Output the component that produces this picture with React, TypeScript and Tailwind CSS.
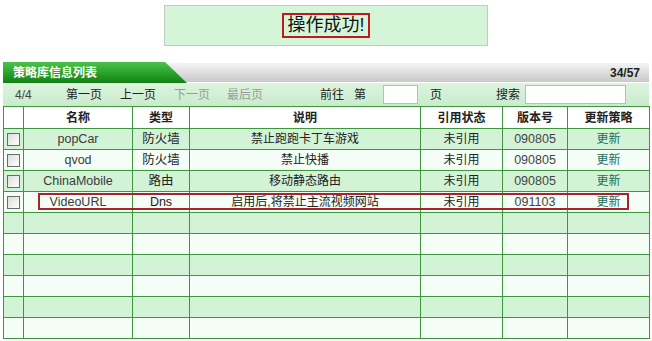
const rows = [
  { name: "popCar", type: "防火墙", desc: "禁止跑跑卡丁车游戏", status: "未引用", ver: "090805" },
  { name: "qvod", type: "防火墙", desc: "禁止快播", status: "未引用", ver: "090805" },
  { name: "ChinaMobile", type: "路由", desc: "移动静态路由", status: "未引用", ver: "090805" },
  { name: "VideoURL", type: "Dns", desc: "启用后,将禁止主流视频网站", status: "未引用", ver: "091103" },
];

const emptyRows = [0, 1, 2, 3, 4, 5];

function Checkbox() {
  return (
    <span className="inline-block h-[13px] w-[13px] border border-[#6b6b6b] bg-gradient-to-br from-[#dcdcdc] to-[#ffffff] align-middle" />
  );
}

export default function App() {
  const font = { fontFamily: '"Liberation Sans", "Noto Sans CJK SC", sans-serif' };
  return (
    <div className="h-[341px] w-[652px] overflow-hidden bg-white px-[3px] text-[12px] text-[#222]" style={font}>
      {/* 提示框 */}
      <div className="mx-auto mt-[5px] flex h-[41px] w-[324px] items-center justify-center border border-[#c4c9c4] bg-[#d5f5d9]">
        <span className="border-2 border-[#c0181d] px-[3px] text-[18px] leading-[21px] text-[#111]">
          操作成功!
        </span>
      </div>

      {/* 标题栏 */}
      <div className="relative mt-[16px] h-[21px]">
        <div className="absolute inset-x-0 top-[1px] h-[19px] bg-gradient-to-b from-[#f4f4f4] to-[#c9c9c9]" />
        <div className="absolute left-0 top-0 h-[21px] w-[184px] bg-gradient-to-b from-[#4cc24c] via-[#2aa52a] to-[#167e16] [clip-path:polygon(0_0,162px_0,184px_100%,0_100%)]" />
        <div className="relative flex h-full items-center justify-between pl-[10px] pr-[9px]">
          <span className="font-bold text-white">策略库信息列表</span>
          <span className="font-bold text-[#222]">34/57</span>
        </div>
      </div>

      {/* 工具栏 */}
      <div className="flex h-[23px] items-center bg-gradient-to-b from-[#ddf3dd] to-[#c9eccc] text-[#222]">
        <span className="ml-[12px] w-[51px] text-[#444]">4/4</span>
        <span className="w-[54px]">第一页</span>
        <span className="w-[54px]">上一页</span>
        <span className="w-[53px] text-[#9a9a9a]">下一页</span>
        <span className="w-[93px] text-[#9a9a9a]">最后页</span>
        <span className="w-[34px]">前往</span>
        <span className="w-[29px]">第</span>
        <span className="h-[19px] w-[35px] border border-[#bcbcbc] bg-white" />
        <span className="ml-[12px] w-[66px]">页</span>
        <span className="w-[29px]">搜索</span>
        <span className="h-[19px] w-[101px] border border-[#bcbcbc] bg-white" />
      </div>

      {/* 列表 */}
      <div className="relative">
        <table className="w-[646px] table-fixed border-collapse">
          <colgroup>
            <col className="w-[20px]" />
            <col className="w-[109px]" />
            <col className="w-[57px]" />
            <col className="w-[231px]" />
            <col className="w-[82px]" />
            <col className="w-[65px]" />
            <col className="w-[82px]" />
          </colgroup>
          <thead>
            <tr className="h-[22px] bg-white font-bold">
              <th className="border border-[#3f963f]" />
              <th className="border border-[#3f963f]">名称</th>
              <th className="border border-[#3f963f]">类型</th>
              <th className="border border-[#3f963f]">说明</th>
              <th className="border border-[#3f963f]">引用状态</th>
              <th className="border border-[#3f963f]">版本号</th>
              <th className="border border-[#3f963f]">更新策略</th>
            </tr>
          </thead>
          <tbody>
            {rows.map((r, i) => (
              <tr key={r.name} className={`h-[21px] text-center ${i % 2 === 0 ? "bg-[#d3f3d6]" : "bg-[#f5fdf7]"}`}>
                <td className="border border-[#3f963f]">
                  <Checkbox />
                </td>
                <td className="border border-[#3f963f] text-[12.5px] text-[#3a3a3a]">{r.name}</td>
                <td className="border border-[#3f963f] text-[12.5px]">{r.type}</td>
                <td className="border border-[#3f963f]">{r.desc}</td>
                <td className="border border-[#3f963f]">{r.status}</td>
                <td className="border border-[#3f963f] text-[12.5px] text-[#444]">{r.ver}</td>
                <td className="border border-[#3f963f] text-[#1c6e5c]">更新</td>
              </tr>
            ))}
            {emptyRows.map((n) => (
              <tr key={n} className={`h-[21px] ${n % 2 === 0 ? "bg-[#d3f3d6]" : "bg-[#f5fdf7]"}`}>
                <td className="border border-[#3f963f]" />
                <td className="border border-[#3f963f]" />
                <td className="border border-[#3f963f]" />
                <td className="border border-[#3f963f]" />
                <td className="border border-[#3f963f]" />
                <td className="border border-[#3f963f]" />
                <td className="border border-[#3f963f]" />
              </tr>
            ))}
          </tbody>
        </table>
        {/* 高亮框 */}
        <div className="pointer-events-none absolute left-[35px] top-[87px] h-[17px] w-[591px] border-2 border-[#a3262a]" />
      </div>
    </div>
  );
}
